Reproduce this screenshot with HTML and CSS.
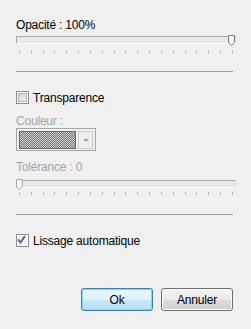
FILE: index.html
```html
<!DOCTYPE html>
<html lang="fr">
  <head>
    <meta charset="UTF-8" />
    <title>Opacité</title>
    <link rel="stylesheet" href="styles.css">
  </head>
  <body>
    <div class="panel">
      <div class="label">Opacité : 100%</div>
      <div class="slider">
        <div class="track"></div>
        <svg class="thumb thumbRight" width="7" height="11" viewBox="0 0 7 11">
          <path d="M0.5 0.5 H6.5 V7.5 L3.5 10.5 L0.5 7.5 Z" fill="#f4f4f4" stroke="#7c7c7c" />
        </svg>
      </div>
      <div class="ticks">
        <span></span><span></span><span></span><span></span><span></span><span></span><span></span><span></span><span></span><span></span><span></span><span></span><span></span><span></span><span></span><span></span><span></span><span></span><span></span>
      </div>

      <div class="sep"></div>

      <label class="check">
        <span class="box"><span class="inner"></span></span>
        <span>Transparence</span>
      </label>

      <div class="label disabled couleur">Couleur :</div>
      <div class="combo">
        <div class="swatch"></div>
        <div class="drop"><span class="arrow"></span></div>
      </div>

      <div class="label disabled tolerance">Tolérance : 0</div>
      <div class="slider slider2">
        <div class="track"></div>
        <svg class="thumb thumbLeft" width="7" height="11" viewBox="0 0 7 11">
          <path d="M0.5 0.5 H6.5 V7.5 L3.5 10.5 L0.5 7.5 Z" fill="#f4f4f4" stroke="#a8a8a8" />
        </svg>
      </div>
      <div class="ticks ticks2">
        <span></span><span></span><span></span><span></span><span></span><span></span><span></span><span></span><span></span><span></span><span></span><span></span><span></span><span></span><span></span><span></span><span></span><span></span><span></span>
      </div>

      <div class="sep sep2"></div>

      <label class="check check2">
        <span class="box">
          <span class="inner">
            <svg width="9" height="9" viewBox="0 0 9 9">
              <path d="M1 4.5 L3.5 7.5 L8 1" fill="none" stroke="#45619a" stroke-width="1.8" />
            </svg>
          </span>
        </span>
        <span>Lissage automatique</span>
      </label>

      <div class="buttons">
        <button class="btn btnOk">Ok</button>
        <button class="btn">Annuler</button>
      </div>
    </div>
  </body>
</html>
```

FILE: styles.css
```css
* {
  margin: 0;
  padding: 0;
  box-sizing: border-box;
}

body {
  background: #f0f0f0;
  font-family: "Liberation Sans", Arial, sans-serif;
  font-size: 12px;
  letter-spacing: -0.2px;
  color: #000;
}

.panel {
  width: 251px;
  height: 329px;
  padding: 18px 15px 0 16px;
}

.label {
  line-height: 14px;
}

.label.disabled {
  color: #a3a3a3;
}

.slider {
  position: relative;
  margin-top: 4px;
  height: 8px;
}

.track {
  height: 8px;
  background: #e7e9ea;
  border-top: 1px solid #a9a9a9;
  border-left: 1px solid #a9a9a9;
  border-right: 1px solid #dadada;
  border-bottom: 1px solid #ffffff;
}

.thumb {
  position: absolute;
  top: -1px;
  display: block;
}

.thumbRight {
  right: 1px;
}

.thumbLeft {
  left: 0;
}

.ticks {
  display: flex;
  justify-content: space-between;
  margin-top: 7px;
  padding: 0 3px;
  height: 3px;
}

.ticks span {
  width: 1px;
  height: 3px;
  background: #b4b4b4;
}

.sep {
  margin-top: 17px;
  margin-right: 3px;
  border-top: 1px solid #a0a0a0;
}

.check {
  display: flex;
  align-items: center;
  height: 15px;
  margin-top: 18px;
}

.box {
  width: 13px;
  height: 13px;
  margin-right: 4px;
  border: 1px solid #8e8f8f;
  background: #fff;
  padding: 1px;
}

.inner {
  display: block;
  width: 9px;
  height: 9px;
  border: 1px solid #b4b8bd;
  background: linear-gradient(135deg, #cdd0d4, #f4f4f4);
  position: relative;
}

.inner svg {
  position: absolute;
  left: -1px;
  top: -1px;
}

.check2 .inner {
  border: none;
  background: linear-gradient(135deg, #e6e8ea, #fafafa);
}

.couleur {
  margin-top: 9px;
}

.combo {
  display: flex;
  gap: 2px;
  width: 80px;
  height: 23px;
  padding: 2px;
  border: 1px solid #a6a6a6;
  background: #f0f0f0;
}

.swatch {
  width: 59px;
  height: 18px;
  border: 1px solid #6b6b6b;
  background: repeating-conic-gradient(#6f6f6f 0 25%, #d8d8d8 0 50%) 0 0 / 2px 2px;
}

.drop {
  display: flex;
  align-items: center;
  justify-content: center;
  width: 15px;
  height: 18px;
  border: 1px solid #cdcdcd;
  background: #eeeeee;
}

.arrow {
  width: 0;
  height: 0;
  border-left: 3px solid transparent;
  border-right: 3px solid transparent;
  border-top: 3px solid #a0a0a0;
}

.tolerance {
  margin-top: 9px;
}

.slider2 {
  margin-top: 6px;
}

.ticks2 {
  margin-top: 4px;
}

.sep2 {
  margin-top: 19px;
}

.check2 {
  margin-top: 18px;
}

.buttons {
  display: flex;
  justify-content: flex-end;
  gap: 8px;
  margin-top: 40px;
  margin-right: 3px;
}

.btn {
  width: 72px;
  height: 23px;
  font-family: "Liberation Sans", Arial, sans-serif;
  font-size: 12px;
  letter-spacing: -0.2px;
  color: #000;
  border: 1px solid #707070;
  border-radius: 3px;
  background: linear-gradient(#f2f2f2 0, #ebebeb 50%, #dddddd 51%, #cfcfcf 100%);
  box-shadow: inset 0 0 0 1px #fcfcfc;
}

.btnOk {
  border-color: #3c7fb1;
  background: linear-gradient(#eaf6fd 0, #e0f3fc 50%, #c8e8fa 51%, #b6def6 100%);
  box-shadow: inset 0 0 0 1px #7fdcf8;
}
```
